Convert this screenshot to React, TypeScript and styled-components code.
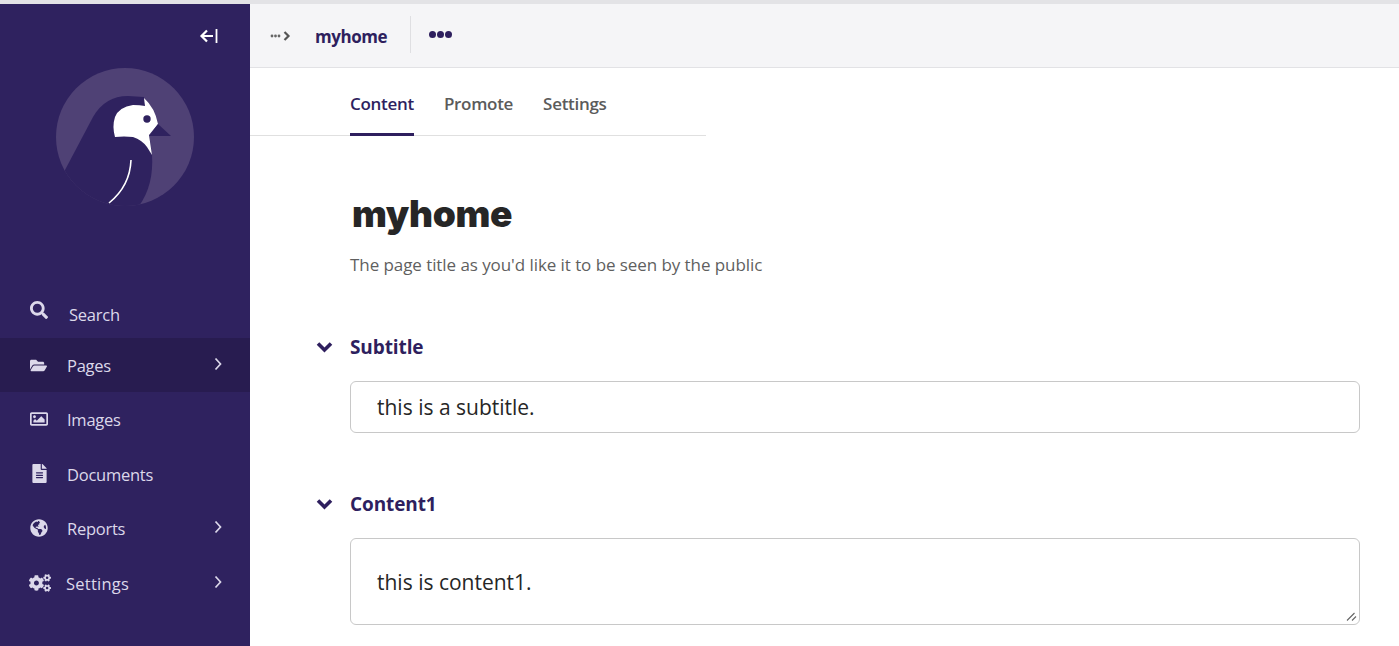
import React from "react";
import styled, { createGlobalStyle } from "styled-components";
import { FaSearch, FaFolderOpen, FaRegImage, FaFileAlt, FaGlobeAmericas, FaCogs } from "react-icons/fa";

const Global = createGlobalStyle`
  html, body { margin: 0; padding: 0; height: 100%; overflow: hidden; background: #fff; }
  body { font-family: "Open Sans", "Noto Sans", sans-serif; }
  * { box-sizing: border-box; }
`;

const Shell = styled.div`
  display: flex;
  width: 1399px;
  height: 646px;
  border-top: 4px solid #e3e3e6;
  overflow: hidden;
`;

const Sidebar = styled.aside`
  width: 250px;
  flex: none;
  background: #2f225f;
  display: flex;
  flex-direction: column;
`;

const CollapseRow = styled.div`
  height: 64px;
  display: flex;
  justify-content: flex-end;
  align-items: flex-start;
  padding: 24px 32px 0 0;
  color: #fff;
`;

const LogoWrap = styled.div`
  height: 223px;
  padding-left: 56px;
  svg { display: block; }
`;

const Nav = styled.nav`
  display: flex;
  flex-direction: column;
`;

const NavItem = styled.div<{ $active?: boolean; $h: number }>`
  height: ${(p) => p.$h}px;
  display: flex;
  align-items: center;
  padding-left: 30px;
  background: ${(p) => (p.$active ? "#281c50" : "transparent")};
  color: #dcd8ea;
  font-size: 16.5px;
  letter-spacing: -0.25px;
`;

const NavIcon = styled.span`
  width: 37px;
  flex: none;
  display: flex;
  align-items: center;
  color: #dcd8ea;
  svg { display: block; }
`;

const SearchIcon = styled(NavIcon)`
  width: 39px;
  margin-top: -10px;
`;

const CogIcon = styled(NavIcon)`
  margin-left: -1px;
`;

const NavText = styled.span`
  flex: 1;
  margin-top: 1px;
`;

const SearchText = styled(NavText)`
  margin-top: -1px;
`;

const SettingsText = styled(NavText)`
  letter-spacing: 0.25px;
`;

const NavArrow = styled.span`
  width: 36px;
  flex: none;
  display: flex;
  margin-top: -2px;
`;

const Main = styled.main`
  flex: 1;
  min-width: 0;
  display: flex;
  flex-direction: column;
`;

const TopBar = styled.header`
  height: 64px;
  flex: none;
  background: #f5f5f7;
  border-bottom: 1px solid #e2e2e5;
  display: flex;
  align-items: center;
  padding-left: 20px;
`;

const Crumb = styled.span`
  display: flex;
  width: 45px;
  svg { display: block; }
`;

const CrumbTitle = styled.span`
  font-size: 17px;
  font-weight: 700;
  color: #2e1f5e;
  letter-spacing: -0.45px;
  width: 95px;
  margin-top: 2px;
`;

const Divider = styled.span`
  width: 1px;
  height: 37px;
  background: #dfdfe2;
  margin-top: -3px;
`;

const More = styled.span`
  display: flex;
  gap: 1px;
  margin-left: 18px;
  margin-top: -3px;
`;

const Dot = styled.i`
  width: 7px;
  height: 7px;
  border-radius: 50%;
  background: #2e1f5e;
`;

const Tabs = styled.div`
  width: 456px;
  height: 68px;
  flex: none;
  border-bottom: 1px solid #e0e0e0;
  padding-left: 100px;
  display: flex;
  gap: 30px;
`;

const Tab = styled.div<{ $active?: boolean }>`
  height: 68px;
  display: flex;
  align-items: center;
  padding-top: 5px;
  font-size: 17px;
  font-weight: 600;
  letter-spacing: -0.3px;
  color: ${(p) => (p.$active ? "#2e1f5e" : "#5b5b5b")};
  border-bottom: 3px solid ${(p) => (p.$active ? "#2e1f5e" : "transparent")};
`;

const Body = styled.div`
  padding: 53px 39px 0 100px;
`;

const Title = styled.h1`
  margin: 0 0 0 2px;
  font-family: "Inter", "Open Sans", sans-serif;
  font-size: 37px;
  line-height: 50px;
  font-weight: 900;
  color: #262626;
  letter-spacing: -0.35px;
`;

const Help = styled.p`
  margin: 14px 0 0;
  font-size: 17px;
  line-height: 24px;
  letter-spacing: -0.07px;
  color: #5f5f5f;
`;

const Field = styled.section`
  margin-top: 58px;
`;

const FieldSecond = styled(Field)`
  margin-top: 59px;
`;

const FieldLabel = styled.div`
  position: relative;
  height: 24px;
  line-height: 24px;
  font-size: 19px;
  font-weight: 700;
  letter-spacing: -0.1px;
  color: #2e1f5e;
`;

const Toggle = styled.span`
  position: absolute;
  left: -34px;
  top: 6px;
  display: flex;
`;

const TextInput = styled.input`
  display: block;
  width: 100%;
  height: 52px;
  margin-top: 22px;
  padding: 0 26px;
  border: 1px solid #c8c8c8;
  border-radius: 6px;
  background: #fff;
  outline: none;
  font: 400 21px "Open Sans", sans-serif;
  color: #262626;
`;

const AreaWrap = styled.div`
  position: relative;
  margin-top: 22px;
`;

const TextArea = styled.textarea`
  display: block;
  width: 100%;
  height: 87px;
  padding: 29px 26px 0;
  border: 1px solid #c8c8c8;
  border-radius: 6px;
  background: #fff;
  outline: none;
  resize: none;
  font: 400 21px/28px "Open Sans", sans-serif;
  color: #262626;
`;

const Grip = styled.svg`
  position: absolute;
  right: 3px;
  bottom: 4px;
  display: block;
`;

const Logo = () => (
  <svg width="138" height="138" viewBox="56 68 138 138" aria-hidden="true">
    <defs>
      <clipPath id="disc"><circle cx="125" cy="137" r="69" /></clipPath>
    </defs>
    <circle cx="125" cy="137" r="69" fill="#4f4175" />
    <g clipPath="url(#disc)">
      <path d="M65 170 L93 117 Q105 96 128 96 L144 97 L152 155 Q154 185 139 206 L60 206 Z" fill="#2f225f" />
      <path d="M144 98 L145 106 Q140 105 133 105 Q119 107 115 117 Q112 126 115 137 Q124 136 133 137 Q142 140 147 147 L152 155 L149 135 L158 124 Q155 108 144 98 Z" fill="#fff" />
      <circle cx="147" cy="119" r="3.7" fill="#2f225f" />
      <path d="M158 124 L171 136 L149 136 Z" fill="#2f225f" />
      <path d="M131 160 Q130 186 109 203" fill="none" stroke="#fff" strokeWidth="1.6" />
    </g>
  </svg>
);

const CollapseIcon = () => (
  <svg width="19" height="16" viewBox="0 0 19 16" aria-hidden="true">
    <path d="M8 2.5 L2.5 8 L8 13.5 M3 8 H14" fill="none" stroke="#fff" strokeWidth="2.2" />
    <path d="M17.5 1 V15" stroke="#fff" strokeWidth="1.8" />
  </svg>
);

const CrumbIcon = () => (
  <svg width="22" height="12" viewBox="0 0 22 12" aria-hidden="true">
    <circle cx="2" cy="6" r="1.4" fill="#666" />
    <circle cx="5.5" cy="6" r="1.4" fill="#666" />
    <circle cx="9" cy="6" r="1.4" fill="#666" />
    <path d="M14.5 2 L18.5 6 L14.5 10" fill="none" stroke="#555" strokeWidth="2.2" />
  </svg>
);

const ArrowIcon = () => (
  <svg width="8" height="14" viewBox="0 0 8 14" aria-hidden="true">
    <path d="M1.5 1.5 L6.5 7 L1.5 12.5" fill="none" stroke="#dcd8ea" strokeWidth="1.7" />
  </svg>
);

const ChevronIcon = () => (
  <svg width="17" height="12" viewBox="0 0 17 12" aria-hidden="true">
    <path d="M2 2.5 L8.5 9 L15 2.5" fill="none" stroke="#2e1f5e" strokeWidth="3.6" />
  </svg>
);

const items = [
  { label: "Pages", icon: <FaFolderOpen size={17} />, h: 54, arrow: true, active: true },
  { label: "Images", icon: <FaRegImage size={18} />, h: 54, arrow: false },
  { label: "Documents", icon: <FaFileAlt size={19} />, h: 55, arrow: false },
  { label: "Reports", icon: <FaGlobeAmericas size={18} />, h: 54, arrow: true },
];

export default function App() {
  return (
    <>
      <Global />
      <Shell>
        <Sidebar>
          <CollapseRow><CollapseIcon /></CollapseRow>
          <LogoWrap><Logo /></LogoWrap>
          <Nav>
            <NavItem $h={47}>
              <SearchIcon><FaSearch size={18} /></SearchIcon>
              <SearchText>Search</SearchText>
            </NavItem>
            {items.map((it) => (
              <NavItem key={it.label} $h={it.h} $active={it.active}>
                <NavIcon>{it.icon}</NavIcon>
                <NavText>{it.label}</NavText>
                {it.arrow && <NavArrow><ArrowIcon /></NavArrow>}
              </NavItem>
            ))}
            <NavItem $h={55}>
              <CogIcon><FaCogs size={22} /></CogIcon>
              <SettingsText>Settings</SettingsText>
              <NavArrow><ArrowIcon /></NavArrow>
            </NavItem>
          </Nav>
        </Sidebar>
        <Main>
          <TopBar>
            <Crumb><CrumbIcon /></Crumb>
            <CrumbTitle>myhome</CrumbTitle>
            <Divider />
            <More><Dot /><Dot /><Dot /></More>
          </TopBar>
          <Tabs>
            <Tab $active>Content</Tab>
            <Tab>Promote</Tab>
            <Tab>Settings</Tab>
          </Tabs>
          <Body>
            <Title>myhome</Title>
            <Help>The page title as you'd like it to be seen by the public</Help>
            <Field>
              <FieldLabel>
                <Toggle><ChevronIcon /></Toggle>
                Subtitle
              </FieldLabel>
              <TextInput readOnly value="this is a subtitle." />
            </Field>
            <FieldSecond>
              <FieldLabel>
                <Toggle><ChevronIcon /></Toggle>
                Content1
              </FieldLabel>
              <AreaWrap>
                <TextArea readOnly value="this is content1." />
                <Grip width="11" height="9" viewBox="0 0 11 9" aria-hidden="true">
                  <path d="M1 8.5 L8.5 1 M6 8.5 L10 4.5" stroke="#666" strokeWidth="1.1" fill="none" />
                </Grip>
              </AreaWrap>
            </FieldSecond>
          </Body>
        </Main>
      </Shell>
    </>
  );
}
